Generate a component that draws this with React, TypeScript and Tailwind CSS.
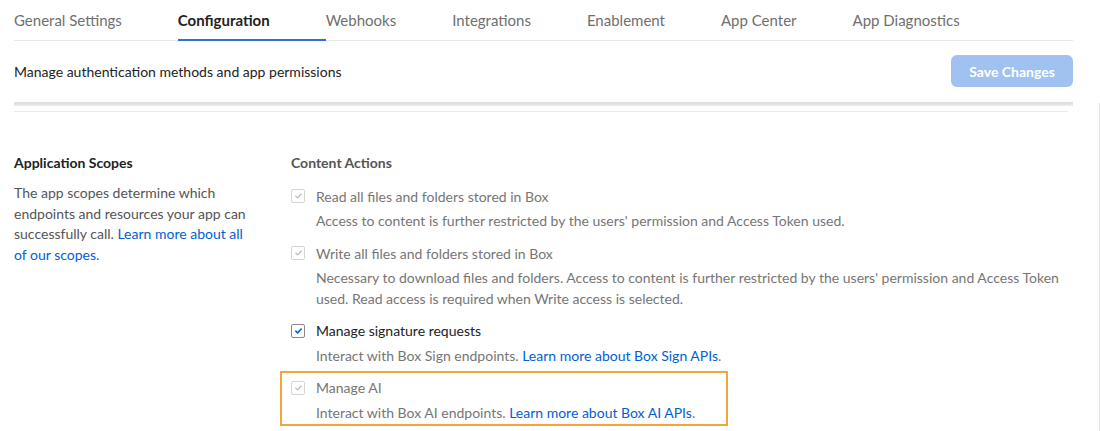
import React from "react";

const tabs = [
  "General Settings",
  "Configuration",
  "Webhooks",
  "Integrations",
  "Enablement",
  "App Center",
  "App Diagnostics",
];

const Check = ({ checked, disabled }: { checked: boolean; disabled?: boolean }) => (
  <span
    className={
      "flex h-[14px] w-[14px] shrink-0 items-center justify-center rounded-[2px] border bg-white " +
      (disabled ? "border-[#d4d4d4]" : "border-[#8a8a8a]")
    }
  >
    {checked && (
      <svg width="9" height="8" viewBox="0 0 9 8" fill="none">
        <path
          d="M1.8 4.2 L3.6 5.9 L7.3 2"
          stroke={disabled ? "#bdbdbd" : "#0061d5"}
          strokeWidth={disabled ? 1.3 : 1.6}
          strokeLinecap="round"
          strokeLinejoin="round"
        />
      </svg>
    )}
  </span>
);

const Scope = ({
  label,
  disabled,
  children,
}: {
  label: string;
  disabled?: boolean;
  children: React.ReactNode;
}) => (
  <div className="flex flex-col">
    <div className="flex h-[20px] items-center gap-[11px]">
      <Check checked disabled={disabled} />
      <span className={"text-[14px] " + (disabled ? "text-[#767676]" : "text-[#222222]")}>{label}</span>
    </div>
    <div className="mt-[5px] pl-[25px] text-[14px] leading-[20.5px] text-[#767676]">{children}</div>
  </div>
);

export default function App() {
  return (
    <div className="flex h-[431px] w-[1100px] overflow-hidden bg-white font-['Lato','Liberation_Sans',sans-serif]">
      <div className="ml-[14px] w-[1059px] shrink-0">
        <nav className="flex h-[41px] items-stretch border-b border-[#e8e8e8]">
          {tabs.map((t) => {
            const active = t === "Configuration";
            return (
              <div
                key={t}
                className={
                  "relative flex items-center pr-[56px] text-[15px] " +
                  (active ? "font-bold text-[#222222]" : "text-[#6f6f6f]")
                }
              >
                {t}
                {active && <span className="absolute bottom-[-1px] left-0 right-0 h-[2px] bg-[#2f6fd8]" />}
              </div>
            );
          })}
        </nav>

        <div className="flex h-[61px] items-center justify-between pb-[1px]">
          <p className="text-[14px] text-[#222222]">Manage authentication methods and app permissions</p>
          <button className="h-[32px] w-[122px] rounded-[6px] bg-[#9fc2f0] text-[14px] font-bold text-white">
            Save Changes
          </button>
        </div>
        <div className="h-[4px] bg-gradient-to-b from-[#dcdcdc] to-[#ececec]" />
        <div className="mt-[5px] h-px w-[1054px] bg-[#e9e9e9]" />

        <div className="mt-[41px] flex">
          <div className="w-[277px] shrink-0">
            <h3 className="text-[14px] font-bold leading-[20px] text-[#222222]">Application Scopes</h3>
            <p className="mt-[10px] w-[240px] text-[14px] leading-[20.5px] text-[#555555]">
              The app scopes determine which endpoints and resources your app can successfully call.{" "}
              <a className="text-[#0061d5]">Learn more about all of our scopes.</a>
            </p>
          </div>
          <div className="flex flex-1 flex-col">
            <h3 className="text-[14px] font-bold leading-[20px] text-[#555555]">Content Actions</h3>
            <div className="mt-[13px] flex flex-col gap-[11.5px]">
              <Scope label="Read all files and folders stored in Box" disabled>
                Access to content is further restricted by the users' permission and Access Token used.
              </Scope>
              <Scope label="Write all files and folders stored in Box" disabled>
                Necessary to download files and folders. Access to content is further restricted by the users'
                permission and Access Token used. Read access is required when Write access is selected.
              </Scope>
              <Scope label="Manage signature requests">
                Interact with Box Sign endpoints. <a className="text-[#0061d5]">Learn more about Box Sign APIs</a>.
              </Scope>
              <div className="-ml-[11px] -mt-[7px] w-[448px] border-2 border-[#f5a33c] pb-[1px] pl-[9px] pt-[5px]">
                <Scope label="Manage AI" disabled>
                  Interact with Box AI endpoints. <a className="text-[#0061d5]">Learn more about Box AI APIs</a>.
                </Scope>
              </div>
            </div>
          </div>
        </div>
      </div>
      <div className="ml-auto mt-[103px] w-px bg-[#e6e6e6]" />
    </div>
  );
}
